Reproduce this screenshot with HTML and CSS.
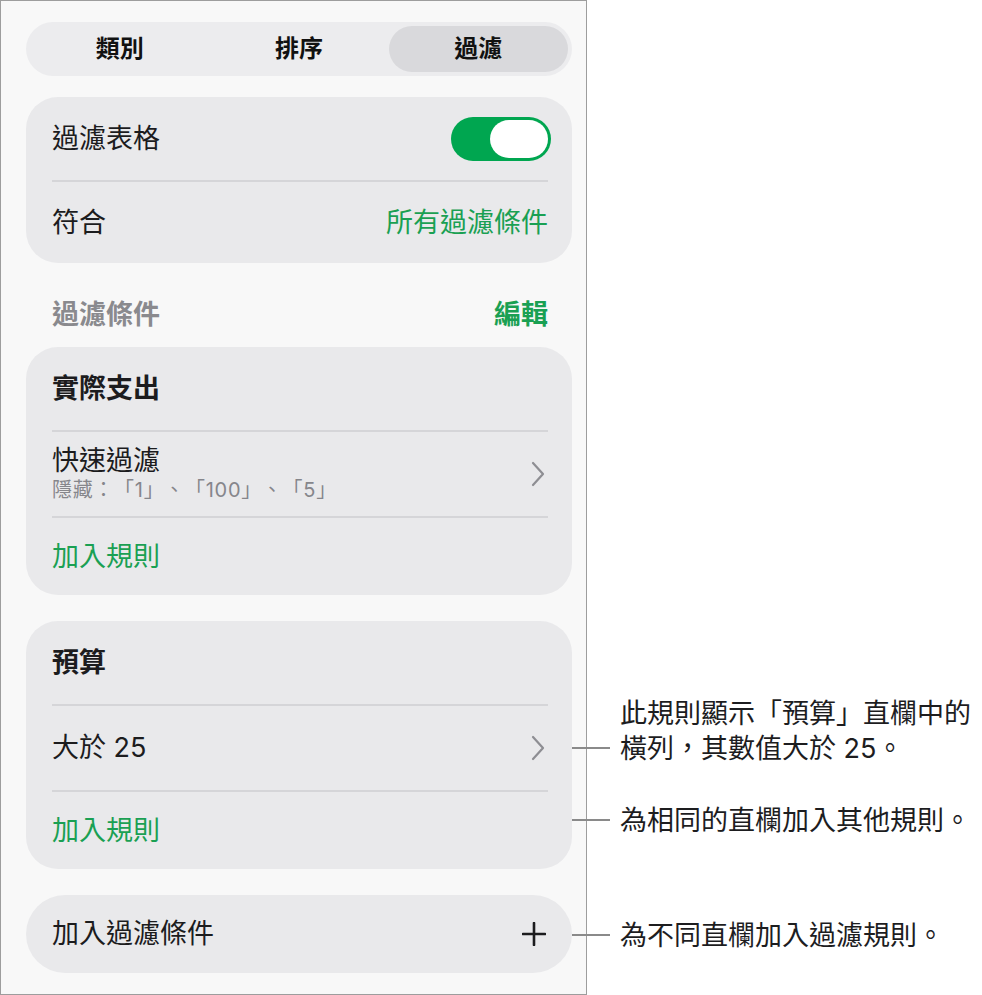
FILE: index.html
```html
<!DOCTYPE html>
<html lang="zh-Hant">
<head>
    <meta charset="UTF-8">
    <meta name="viewport" content="width=device-width, initial-scale=1.0">
    <title>過濾</title>
    <link rel="stylesheet" href="styles.css">
</head>
<body>
    <div class="page">
        <div class="panel">
            <!-- Tabs -->
            <div class="segmented">
                <div class="segment">類別</div>
                <div class="segment">排序</div>
                <div class="segment active">過濾</div>
            </div>

            <!-- Table filter switch -->
            <div class="card">
                <div class="row">
                    <span>過濾表格</span>
                    <span class="toggle"><span class="knob"></span></span>
                </div>
                <div class="row">
                    <span>符合</span>
                    <span class="value">所有過濾條件</span>
                </div>
            </div>

            <div class="section-header">
                <span>過濾條件</span>
                <span class="edit">編輯</span>
            </div>

            <!-- Column: 實際支出 -->
            <div class="card">
                <div class="row title">實際支出</div>
                <div class="row tall">
                    <div class="stack">
                        <span>快速過濾</span>
                        <span class="sub">隱藏：「1」、「100」、「5」</span>
                    </div>
                    <svg class="chevron" width="14" height="26" viewBox="0 0 14 26">
                        <path d="M2 2 L12 13 L2 24" fill="none" stroke="#8e8e93" stroke-width="2.2" stroke-linecap="round" stroke-linejoin="round"/>
                    </svg>
                </div>
                <div class="row add">加入規則</div>
            </div>

            <!-- Column: 預算 -->
            <div class="card">
                <div class="row title">預算</div>
                <div class="row tall">
                    <span>大於 25</span>
                    <svg class="chevron" width="14" height="26" viewBox="0 0 14 26">
                        <path d="M2 2 L12 13 L2 24" fill="none" stroke="#8e8e93" stroke-width="2.2" stroke-linecap="round" stroke-linejoin="round"/>
                    </svg>
                </div>
                <div class="row add">加入規則</div>
            </div>

            <div class="card pill">
                <div class="row add-filter">
                    <span>加入過濾條件</span>
                    <svg class="plus" width="24" height="24" viewBox="0 0 24 24">
                        <path d="M12 1 V23 M1 12 H23" fill="none" stroke="#1c1c1e" stroke-width="2.6" stroke-linecap="round"/>
                    </svg>
                </div>
            </div>
        </div>

        <!-- Callouts -->
        <div class="callout c1">
            <span class="callout-line"></span>
            <p class="callout-text">此規則顯示「預算」直欄中的<br>橫列，其數值大於 25。</p>
        </div>
        <div class="callout c2">
            <span class="callout-line"></span>
            <p class="callout-text">為相同的直欄加入其他規則。</p>
        </div>
        <div class="callout c3">
            <span class="callout-line"></span>
            <p class="callout-text">為不同直欄加入過濾規則。</p>
        </div>
    </div>
</body>
</html>
```

FILE: styles.css
```css
* {
    margin: 0;
    padding: 0;
    box-sizing: border-box;
}

body {
    background-color: #ffffff;
    font-family: "Inter", "Noto Sans CJK TC", sans-serif;
    color: #1c1c1e;
    text-spacing-trim: space-all;
}

.page {
    position: relative;
    width: 982px;
    height: 995px;
}

/* Phone panel */
.panel {
    width: 587px;
    height: 995px;
    border: 1px solid #9d9d9d;
    background-color: #f8f8f8;
    padding: 21px 14px 0 25px;
    display: flex;
    flex-direction: column;
}

/* Segmented control */
.segmented {
    height: 54px;
    border-radius: 27px;
    background-color: #ececee;
    padding: 4px;
    display: flex;
}

.segment {
    flex: 1;
    display: flex;
    align-items: center;
    justify-content: center;
    border-radius: 23px;
    padding-bottom: 5px;
    font-size: 24px;
    font-weight: 700;
    color: #111111;
}

.segment.active {
    background-color: #d9d9dc;
}

/* Cards */
.card {
    margin-top: 21px;
    background-color: #e9e9eb;
    border-radius: 32px;
    padding: 0 24px 0 26px;
}

.card + .card {
    margin-top: 26px;
}

.section-header + .card {
    margin-top: 0;
}

.card.pill {
    border-radius: 39px;
}

.row {
    height: 83px;
    display: flex;
    align-items: center;
    justify-content: space-between;
    font-size: 27px;
    line-height: 30px;
    border-top: 2px solid #d5d5d8;
}

.row:first-child {
    border-top: none;
}

.row.title {
    font-weight: 700;
}

.row.tall {
    height: 86px;
}

.row.add {
    height: 79px;
    color: #1aa053;
}

.row.add-filter {
    height: 78px;
}

.value {
    color: #1aa053;
}

.stack {
    display: flex;
    flex-direction: column;
}

.sub {
    font-size: 20px;
    line-height: 26px;
    letter-spacing: 0.7px;
    color: #86868b;
    margin-top: 1px;
}

.chevron {
    margin-right: 3px;
}

.plus {
    margin-right: 2px;
}

/* Toggle */
.toggle {
    width: 100px;
    height: 44px;
    border-radius: 22px;
    background-color: #00a650;
    padding: 3px;
    margin-right: -3px;
    display: flex;
    justify-content: flex-end;
}

.knob {
    width: 58px;
    height: 38px;
    border-radius: 19px;
    background-color: #ffffff;
}

/* Section header */
.section-header {
    padding: 37px 24px 17px 26px;
    display: flex;
    justify-content: space-between;
    font-size: 27px;
    line-height: 30px;
    font-weight: 700;
    color: #8a8a8e;
}

.edit {
    color: #1aa053;
}

/* Callouts */
.callout {
    position: absolute;
    left: 572px;
    display: flex;
    align-items: flex-end;
}

.callout-line {
    width: 38px;
    height: 2px;
    background-color: #8a8a8a;
    margin-bottom: 17px;
}

.callout-text {
    margin-left: 10px;
    font-size: 27px;
    line-height: 35px;
    color: #1d1d1f;
    white-space: nowrap;
}

.c1 {
    top: 696px;
}

.c2 {
    top: 803px;
}

.c3 {
    top: 918px;
}
```
